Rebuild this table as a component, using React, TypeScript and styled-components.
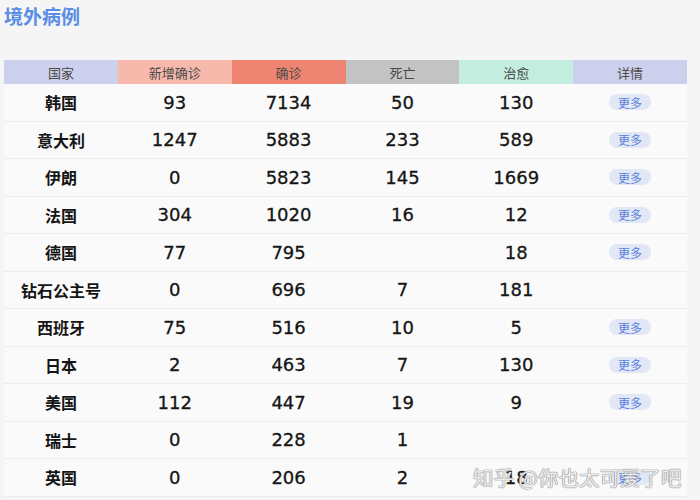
import React from "react";
import styled, { createGlobalStyle } from "styled-components";

const Global = createGlobalStyle`
  html, body { margin: 0; padding: 0; background: #f5f5f6; }
  body { font-family: "DejaVu Sans", "Noto Sans CJK SC", sans-serif; }
`;

const Page = styled.div`
  position: relative;
  width: 700px;
  height: 500px;
  overflow: hidden;
  background: #f5f5f6;
  padding: 0 13px 0 4px;
  box-sizing: border-box;
`;

const Title = styled.h1`
  margin: 0;
  padding-top: 4px;
  height: 60px;
  box-sizing: border-box;
  font-family: "Noto Sans CJK SC", sans-serif;
  font-size: 19px;
  font-weight: 700;
  line-height: 24px;
  color: #5a8de4;
`;

const Table = styled.div`
  display: grid;
  grid-template-columns: repeat(6, 1fr);
  background: #fafafa;
`;

const Head = styled.div<{ $bg: string }>`
  height: 24px;
  display: flex;
  align-items: center;
  justify-content: center;
  background: ${(p) => p.$bg};
  font-family: "Noto Sans CJK SC", sans-serif;
  font-size: 13px;
  color: #4a4a4a;
`;

const Cell = styled.div`
  height: 37.5px;
  box-sizing: border-box;
  border-bottom: 1px solid #ececec;
  display: flex;
  align-items: center;
  justify-content: center;
  font-family: "DejaVu Sans", "Noto Sans CJK SC", sans-serif;
  font-size: 18px;
  font-weight: 400;
  color: #151515;
  -webkit-text-stroke: 0.3px #151515;
`;

const NameCell = styled(Cell)`
  font-family: "Noto Sans CJK SC", sans-serif;
  font-size: 16px;
  font-weight: 700;
  -webkit-text-stroke: 0;
`;

const More = styled.span`
  display: inline-flex;
  align-items: center;
  justify-content: center;
  width: 42px;
  height: 16px;
  border-radius: 8px;
  background: #e2e7f5;
  color: #5a7fdc;
  font-family: "Noto Sans CJK SC", sans-serif;
  font-size: 12px;
  font-weight: 400;
  -webkit-text-stroke: 0;
`;

const Watermark = styled.div`
  position: absolute;
  left: 473px;
  top: 462px;
  font-family: "Noto Sans CJK SC", sans-serif;
  font-size: 20.5px;
  color: rgba(255, 255, 255, 0.85);
  text-shadow: 0 0 1px #888, 0 0 1px #888, 0 0 1px #999;
  white-space: nowrap;
`;

const headers: [string, string][] = [
  ["国家", "#cdd0ec"],
  ["新增确诊", "#f6b9ab"],
  ["确诊", "#ee8472"],
  ["死亡", "#c3c3c3"],
  ["治愈", "#c3eedf"],
  ["详情", "#cdd0ec"],
];

type Row = [string, string, string, string, string, boolean];

const rows: Row[] = [
  ["韩国", "93", "7134", "50", "130", true],
  ["意大利", "1247", "5883", "233", "589", true],
  ["伊朗", "0", "5823", "145", "1669", true],
  ["法国", "304", "1020", "16", "12", true],
  ["德国", "77", "795", "", "18", true],
  ["钻石公主号", "0", "696", "7", "181", false],
  ["西班牙", "75", "516", "10", "5", true],
  ["日本", "2", "463", "7", "130", true],
  ["美国", "112", "447", "19", "9", true],
  ["瑞士", "0", "228", "1", "", false],
  ["英国", "0", "206", "2", "18", true],
];

export default function App() {
  return (
    <Page>
      <Global />
      <Title>境外病例</Title>
      <Table>
        {headers.map(([t, c]) => (
          <Head key={t} $bg={c}>
            {t}
          </Head>
        ))}
        {rows.map((r) => (
          <React.Fragment key={r[0]}>
            <NameCell>{r[0]}</NameCell>
            <Cell>{r[1]}</Cell>
            <Cell>{r[2]}</Cell>
            <Cell>{r[3]}</Cell>
            <Cell>{r[4]}</Cell>
            <Cell>{r[5] ? <More>更多</More> : null}</Cell>
          </React.Fragment>
        ))}
      </Table>
      <Watermark>知乎 @你也太可爱了吧</Watermark>
    </Page>
  );
}
